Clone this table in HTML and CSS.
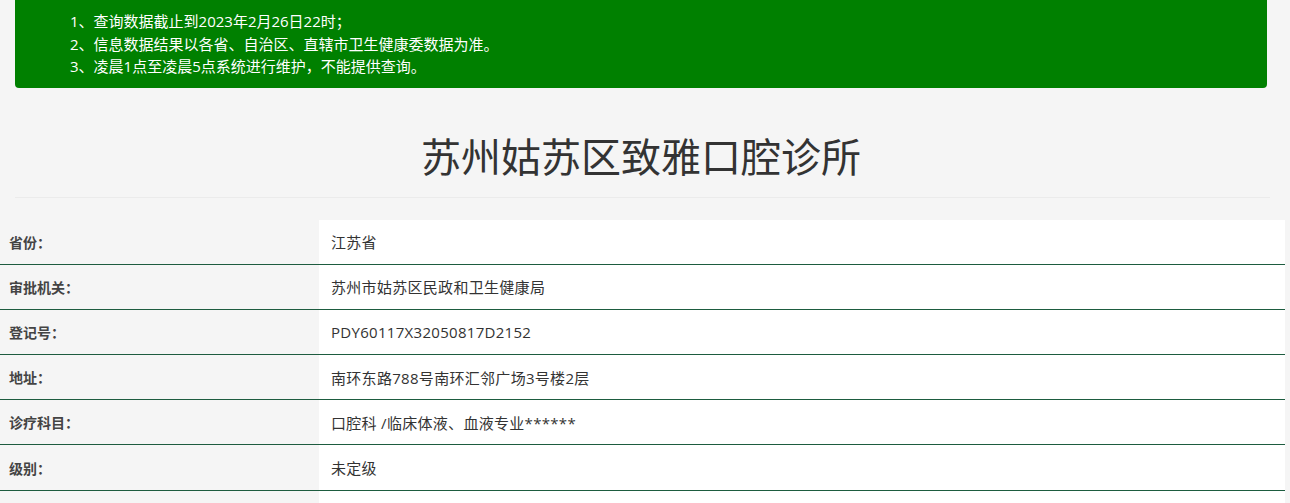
FILE: index.html
```html
<!DOCTYPE html>
<html lang="zh-CN">
<head>
<meta charset="utf-8">
<title>苏州姑苏区致雅口腔诊所</title>
<link rel="stylesheet" href="styles.css">
</head>
<body>
<div class="page">
  <div class="notice">
    <p>1、查询数据截止到2023年2月26日22时；</p>
    <p>2、信息数据结果以各省、自治区、直辖市卫生健康委数据为准。</p>
    <p>3、凌晨1点至凌晨5点系统进行维护，不能提供查询。</p>
  </div>
  <h1 class="title">苏州姑苏区致雅口腔诊所</h1>
  <div class="rule"></div>
  <table class="info">
    <tr><th>省份：</th><td>江苏省</td></tr>
    <tr><th>审批机关：</th><td>苏州市姑苏区民政和卫生健康局</td></tr>
    <tr><th>登记号：</th><td>PDY60117X32050817D2152</td></tr>
    <tr><th>地址：</th><td>南环东路788号南环汇邻广场3号楼2层</td></tr>
    <tr><th>诊疗科目：</th><td>口腔科 /临床体液、血液专业******</td></tr>
    <tr><th>级别：</th><td>未定级</td></tr>
    <tr><th></th><td></td></tr>
  </table>
</div>
</body>
</html>
```
FILE: styles.css
```css
html, body {
  margin: 0;
  padding: 0;
  background: #f5f5f5;
}
body {
  font-family: "Open Sans", "Noto Sans CJK SC", sans-serif;
  color: #333;
}
.page {
  width: 1285px;
}
.notice {
  margin: 0 18px 0 15px;
  background: #008000;
  color: #fff;
  border-radius: 0 0 4px 4px;
  padding: 10px 15px 10px 55px;
  font-size: 15px;
  line-height: 22.5px;
}
.notice p {
  margin: 0;
}
.title {
  margin: 47px 18px 18px 15px;
  font-size: 40px;
  line-height: 44px;
  font-weight: normal;
  text-align: center;
  color: #333;
}
.rule {
  margin: 0 15px 0 15px;
  height: 1px;
  background: #ebebeb;
}
.info {
  margin-top: 22px;
  width: 1285px;
  border-collapse: collapse;
}
.info th {
  width: 301px;
  text-align: left;
  font-weight: bold;
  font-size: 14px;
  color: #444;
  background: #f5f5f5;
  padding: 0 9px;
  height: 44.2px;
  border-bottom: 1px solid #1d5c3f;
}
.info td {
  background: #fff;
  font-size: 15px;
  letter-spacing: 0.3px;
  color: #333;
  padding: 0 12px;
  height: 44.2px;
  border-bottom: 1px solid #1d5c3f;
}
```
